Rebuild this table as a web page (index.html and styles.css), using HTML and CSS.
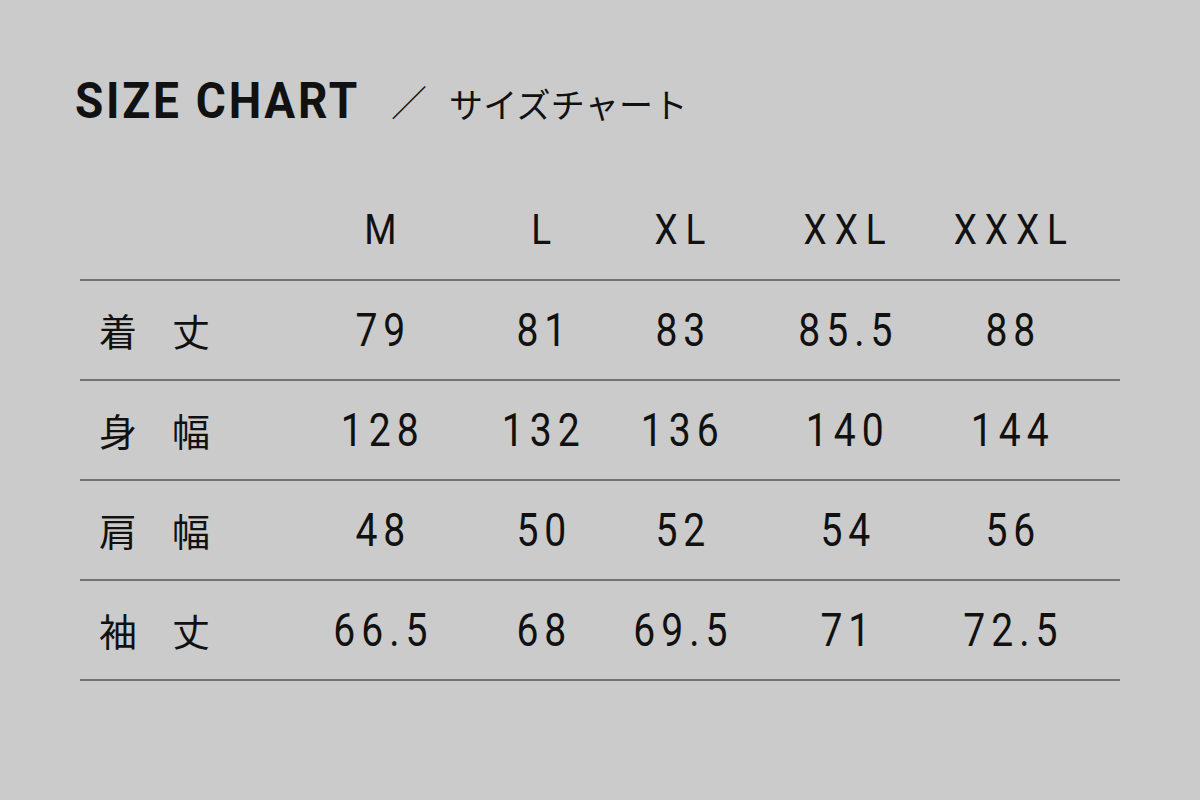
FILE: index.html
```html
<!DOCTYPE html>
<html lang="ja">
<head>
<meta charset="utf-8">
<link rel="stylesheet" href="styles.css">
</head>
<body>
<div class="page">
  <h1 class="title"><span class="en">SIZE CHART</span><span class="slash">／</span><span class="jp">サイズチャート</span></h1>
  <div class="chart">
    <div class="row head">
      <div class="cell label"></div>
      <div class="cell">M</div><div class="cell">L</div><div class="cell">XL</div><div class="cell">XXL</div><div class="cell">XXXL</div><div class="cell"></div>
    </div>
    <div class="row">
      <div class="cell label">着丈</div>
      <div class="cell">79</div><div class="cell">81</div><div class="cell">83</div><div class="cell">85.5</div><div class="cell">88</div><div class="cell"></div>
    </div>
    <div class="row">
      <div class="cell label">身幅</div>
      <div class="cell">128</div><div class="cell">132</div><div class="cell">136</div><div class="cell">140</div><div class="cell">144</div><div class="cell"></div>
    </div>
    <div class="row">
      <div class="cell label">肩幅</div>
      <div class="cell">48</div><div class="cell">50</div><div class="cell">52</div><div class="cell">54</div><div class="cell">56</div><div class="cell"></div>
    </div>
    <div class="row">
      <div class="cell label">袖丈</div>
      <div class="cell">66.5</div><div class="cell">68</div><div class="cell">69.5</div><div class="cell">71</div><div class="cell">72.5</div><div class="cell"></div>
    </div>
  </div>
</div>
</body>
</html>
```
FILE: styles.css
```css
* { box-sizing: border-box; }
html, body { margin: 0; padding: 0; }
body {
  width: 1200px;
  height: 800px;
  background: #cbcbcb;
  color: #111;
  font-family: "Roboto", "Noto Sans CJK JP", sans-serif;
  overflow: hidden;
}
.page {
  padding: 66px 80px 0 80px;
}
.title {
  margin: 0 0 0 -5px;
  height: 70px;
  display: flex;
  align-items: center;
  font-weight: bold;
  line-height: 1;
}
.title .en {
  font-size: 50px;
  letter-spacing: 3px;
  transform: scaleX(0.92);
  transform-origin: left center;
  margin-right: -24px;
}
.title .slash {
  font-family: "Noto Sans CJK JP", sans-serif;
  font-weight: 300;
  font-size: 36px;
  margin-left: 30px;
  margin-right: 22px;
}
.title .jp {
  font-family: "Noto Sans CJK JP", sans-serif;
  font-weight: 400;
  font-size: 34px;
  letter-spacing: 0.3px;
  margin-top: 6px;
}
.chart {
  margin-top: 45px;
}
.row {
  display: grid;
  grid-template-columns: 220px 160px 162px 116px 214px 116px 52px;
  height: 100px;
  align-items: center;
  border-bottom: 2px solid #737373;
}
.cell {
  justify-self: center;
  width: max-content;
  font-size: 46px;
  letter-spacing: 7px;
  text-indent: 7px;
  line-height: 1;
  white-space: nowrap;
  transform: scaleX(0.85);
}
.head .cell {
  font-size: 42px;
  letter-spacing: 9px;
  text-indent: 9px;
  transform: scaleX(0.88);
}
.cell.label {
  justify-self: start;
  transform: none;
  padding-left: 19px;
  text-indent: 0;
  font-family: "Noto Sans CJK JP", sans-serif;
  font-size: 38px;
  letter-spacing: 35px;
}
```
